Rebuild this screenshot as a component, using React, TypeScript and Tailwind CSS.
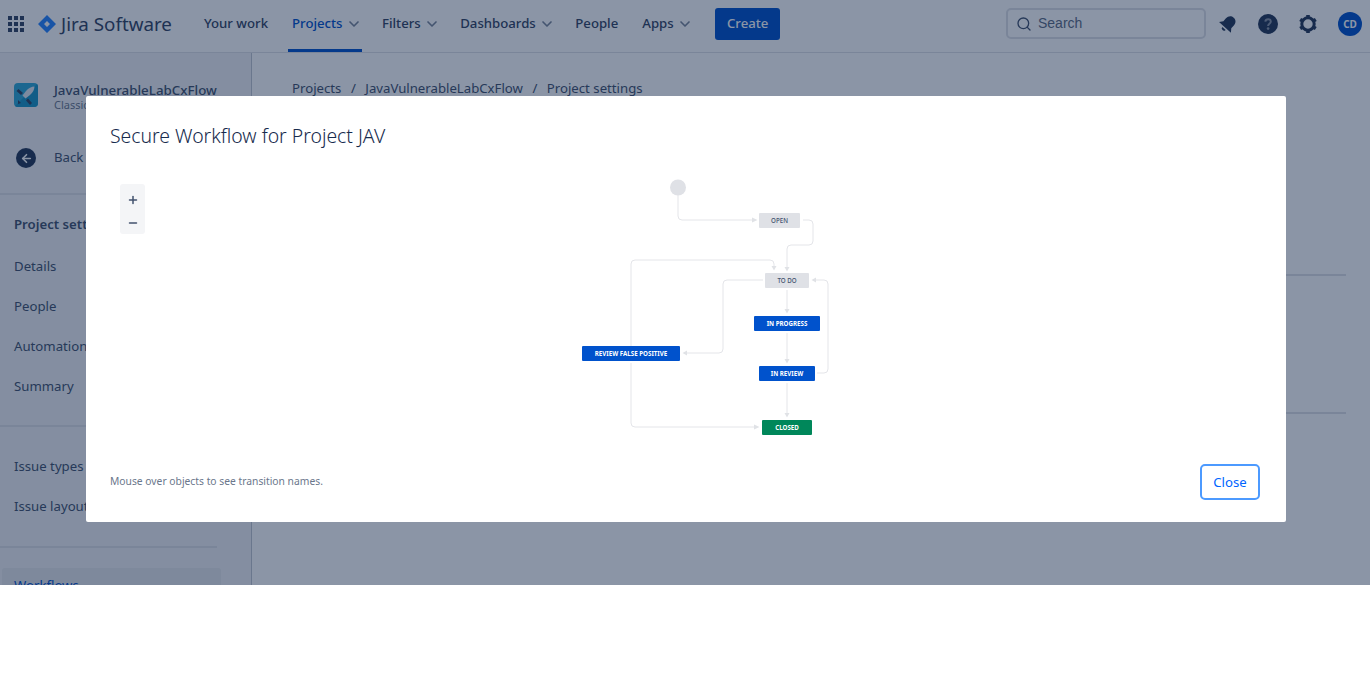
import { ChevronDown, Search, ArrowLeft, Plus, Minus } from 'lucide-react';

const NAV_ITEMS = [
  { label: 'Your work', chevron: false },
  { label: 'Projects', chevron: true, active: true },
  { label: 'Filters', chevron: true },
  { label: 'Dashboards', chevron: true },
  { label: 'People', chevron: false },
  { label: 'Apps', chevron: true },
];

// node boxes in the workflow drawing (same coords as the svg viewBox)
const NODES = [
  { label: 'OPEN', x: 759, y: 213, w: 41, fill: '#dfe1e6', text: '#42526e' },
  { label: 'TO DO', x: 765, y: 273, w: 44, fill: '#dfe1e6', text: '#42526e' },
  { label: 'IN PROGRESS', x: 754, y: 316, w: 66, fill: '#0052cc', text: '#ffffff' },
  { label: 'IN REVIEW', x: 759, y: 366, w: 56, fill: '#0052cc', text: '#ffffff' },
  { label: 'REVIEW FALSE POSITIVE', x: 582, y: 346, w: 98, fill: '#0052cc', text: '#ffffff' },
  { label: 'CLOSED', x: 762, y: 420, w: 50, fill: '#00875a', text: '#ffffff' },
];

const EDGES = [
  'M678 195V216Q678 220 682 220H753',
  'M803 220H809Q813 220 813 224V241Q813 245 809 245H791Q787 245 787 249V267',
  'M631 346V264Q631 260 635 260H770Q774 260 774 264V267',
  'M763 280H727Q723 280 723 284V349Q723 353 719 353H686',
  'M787 290V310',
  'M787 333V360',
  'M817 373H824Q828 373 828 369V284Q828 280 824 280H815',
  'M787 383V415',
  'M631 363V423Q631 427 635 427H755',
];

const ARROWS = [
  '752,217.5 757.5,220 752,222.5',
  '784.5,267 787,271.5 789.5,267',
  '771.5,266 774,270.5 776.5,266',
  '687,350.5 682.5,353 687,355.5',
  '784.5,309 787,313.5 789.5,309',
  '784.5,359 787,363.5 789.5,359',
  '816,277.5 811.5,280 816,282.5',
  '784.5,413 787,417.5 789.5,413',
  '754,424.5 759.5,427 754,429.5',
];

function WorkflowDiagram() {
  return (
    <svg viewBox="110 170 1152 280" className="w-[1152px] h-[280px] block">
      <circle cx="678" cy="187.5" r="8" fill="#dfe1e6" />
      {EDGES.map((d, i) => (
        <path key={i} d={d} fill="none" stroke="#e4e5e9" strokeWidth="1" />
      ))}
      {ARROWS.map((p, i) => (
        <polygon key={i} points={p} fill="#e0e2e6" />
      ))}
      {NODES.map(n => (
        <g key={n.label}>
          <rect x={n.x} y={n.y} width={n.w} height="15" rx="1" fill={n.fill} />
          <text
            x={n.x + n.w / 2}
            y={n.y + 10}
            textAnchor="middle"
            fontSize="6.2"
            fontWeight={n.fill === '#dfe1e6' ? 500 : 700}
            fill={n.text}
            fontFamily='"Noto Sans", sans-serif'
          >
            {n.label}
          </text>
        </g>
      ))}
    </svg>
  );
}

function JiraMark() {
  return (
    <svg viewBox="0 0 18 18" className="w-[18px] h-[18px]">
      <path fillRule="evenodd" d="M9 0l9 9-9 9-9-9zM9 6L6 9l3 3 3-3z" fill="#2684ff" />
    </svg>
  );
}

function BellIcon() {
  return (
    <svg viewBox="0 0 24 24" className="w-6 h-6" fill="#253858">
      <g transform="rotate(42 12 12)">
        <path d="M12 3.500c-3.300 0-5.300 2.400-5.300 5.700v3.800L4 16.500h16L17.300 13V9.200c0-3.300-2-5.700-5.300-5.700z" />
        <path d="M9.800 18a2.200 2.200 0 0 0 4.400 0z" />
      </g>
    </svg>
  );
}

function HelpIcon() {
  return (
    <svg viewBox="0 0 24 24" className="w-6 h-6">
      <circle cx="12" cy="12" r="10" fill="#253858" />
      <path d="M9.300 9.600c.2-1.500 1.300-2.400 2.800-2.400 1.600 0 2.700 1 2.700 2.400 0 2.200-2.700 2.200-2.700 4.300" fill="none" stroke="#8c95a6" strokeWidth="2" />
      <circle cx="12.100" cy="16.600" r="1.300" fill="#8c95a6" />
    </svg>
  );
}

function GearIcon() {
  return (
    <svg viewBox="0 0 24 24" className="w-6 h-6">
      <circle cx="12" cy="12" r="6.200" fill="none" stroke="#253858" strokeWidth="3" />
      <g stroke="#253858" strokeWidth="3.600">
        <path d="M12 3V5.500M12 18.500V21M4.200 7.500L6.400 8.800M17.600 15.200L19.800 16.500M4.200 16.500L6.400 15.200M17.600 8.800L19.800 7.500" />
      </g>
    </svg>
  );
}

function ProjectIcon() {
  return (
    <svg viewBox="0 0 24 24" className="w-6 h-6 rounded-sm">
      <rect width="24" height="24" fill="#2ea9d6" />
      <path d="M0 24L24 0V24z" fill="#1a95c4" />
      <path d="M20.500 3.500c-3 .2-6 1.500-8.500 4.500L8.500 12.500l3 3L16 12c3-2.500 4.300-5.500 4.500-8.500z" fill="#e4ebf2" />
      <path d="M4.500 6l4.500 4-2 2-4.500-4zM12 17.500l2-2 4 4.500-2 2z" fill="#344563" />
      <path d="M4 17l3 3-3 1z" fill="#344563" />
    </svg>
  );
}

function SideLink({ label, bold }: { label: string; bold?: boolean }) {
  return (
    <div className={`h-10 flex items-center pl-[14px] text-[13.2px] whitespace-nowrap text-[#42526e] ${bold ? 'font-semibold' : ''}`}>
      {label}
    </div>
  );
}

export default function App() {
  return (
    <div className="relative h-[585px] overflow-hidden bg-white text-[#172b4d] font-['Noto_Sans',sans-serif]">
      {/* Top bar */}
      <header className="h-[53px] flex items-start border-b border-[#dfe1e6] bg-white">
        <div className="w-[32px] h-12 pl-2 flex items-center">
          <div className="grid grid-cols-3 gap-[2px] w-[16px]">
            {Array.from({ length: 9 }).map((_, i) => (
              <span key={i} className="w-[4px] h-[4px] bg-[#344563]" />
            ))}
          </div>
        </div>
        <div className="flex items-center h-12 ml-[6px] w-[162px]">
          <JiraMark />
          <span className="ml-[5px] text-[18.8px] text-[#344563] leading-none">Jira Software</span>
        </div>
        <nav className="flex items-start gap-4">
          {NAV_ITEMS.map(item => (
            <div
              key={item.label}
              className={`h-[52px] flex items-center pl-1 pb-[1px] border-b-[3px] text-[13.2px] font-medium ${
                item.chevron ? 'pr-0' : 'pr-1'
              } ${item.active ? 'border-[#0052cc] text-[#0052cc]' : 'border-transparent text-[#344563]'}`}
            >
              {item.label}
              {item.chevron && <ChevronDown size={16} strokeWidth={2.500} className="ml-[3.500px] text-[#7a869a]" />}
            </div>
          ))}
        </nav>
        <div className="h-12 flex items-center ml-[22px]">
          <button className="h-8 w-[65px] rounded-[3px] bg-[#0052cc] text-white text-[13.2px] font-medium">Create</button>
        </div>
        <div className="ml-auto h-12 flex items-center">
          <div className="w-[200px] h-[31px] flex items-center rounded-[5px] border-2 border-[#dfe1e6] pl-2 mt-[-1px] font-['Liberation_Sans',sans-serif] text-sm text-[#5e6c84]">
            <Search size={16} className="text-[#42526e]" />
            <span className="ml-[6px] pb-[1px]">Search</span>
          </div>
          <div className="ml-[10px] flex items-center gap-4">
            <BellIcon />
            <HelpIcon />
            <GearIcon />
          </div>
          <div className="ml-[18px] mr-2 w-6 h-6 rounded-full bg-[#0052cc] text-white text-[10px] font-bold flex items-center justify-center">CD</div>
        </div>
      </header>

      <div className="flex h-[532px]">
        {/* Project sidebar */}
        <aside className="w-[252px] shrink-0 bg-[#f1f2f5] border-r border-[#c1c7d0] overflow-hidden">
          <div className="h-[142px] border-b-2 border-[#dfe1e6] mr-[34px] pt-[30px] pl-[14px]">
            <div className="flex items-center h-6">
              <ProjectIcon />
              <div className="ml-4 mt-[4px]">
                <div className="text-[13.35px] font-medium text-[#42526e] leading-4 whitespace-nowrap">JavaVulnerableLabCxFlow</div>
                <div className="text-[11px] text-[#6b778c] leading-[14px]">Classic software project</div>
              </div>
            </div>
            <div className="flex items-center mt-[41px]">
              <span className="w-5 h-5 ml-[2px] rounded-full bg-[#253858] flex items-center justify-center">
                <ArrowLeft size={13} strokeWidth={3} className="text-white" />
              </span>
              <span className="ml-[18px] text-[13.2px] text-[#42526e] whitespace-nowrap">Back to project</span>
            </div>
          </div>
          <div className="pt-[10px] pb-[18px] border-b-2 border-[#dfe1e6] mr-[34px]">
            <SideLink label="Project settings" bold />
            <div className="h-[2px]" />
            <SideLink label="Details" />
            <SideLink label="People" />
            <SideLink label="Automation" />
            <SideLink label="Summary" />
          </div>
          <div className="pt-5 pb-[19px] border-b-2 border-[#dfe1e6] mr-[34px]">
            <SideLink label="Issue types" />
            <SideLink label="Issue layout" />
          </div>
          <div className="mt-5 ml-[2px] mr-[30px] h-9 rounded-[3px] bg-[#e6e8ec] pl-3 flex items-center text-[13.2px] text-[#0052cc]">
            Workflows
          </div>
        </aside>

        {/* Page behind the dialog */}
        <main className="flex-1 pl-10 pr-6">
          <div className="pt-[26px] text-[13.2px] text-[#42526e] flex gap-[9.500px]">
            <span>Projects</span>
            <span>/</span>
            <span>JavaVulnerableLabCxFlow</span>
            <span>/</span>
            <span>Project settings</span>
          </div>
          <div className="mt-[175px] h-[140px] border-y-2 border-[#dfe1e6]" />
        </main>
      </div>

      {/* Dim layer + dialog */}
      <div className="absolute inset-0 bg-[#091e42]/47 pl-[86px] pt-[96px]">
        <section className="w-[1200px] h-[426px] bg-white rounded-[2px] px-6 flex flex-col">
          <h2 className="pt-[25px] h-[74px] text-[19.4px] leading-[30px] font-light text-[#172b4d]">Secure Workflow for Project JAV</h2>
          <div className="relative h-[280px]">
            <WorkflowDiagram />
            <div className="absolute left-[10px] top-[14px] w-[25px] h-[50px] pt-[4px] rounded-[3px] bg-[#f4f5f7] flex flex-col items-center text-[#42526e]">
              <span className="h-[25px] flex items-center"><Plus size={12} strokeWidth={3} /></span>
              <span className="h-[25px] flex items-center"><Minus size={12} strokeWidth={3} /></span>
            </div>
          </div>
          <div className="flex items-start justify-between mt-[14px]">
            <span className="text-[10.3px] text-[#6b778c] mt-[10px]">Mouse over objects to see transition names.</span>
            <button className="w-[60px] h-9 mr-[2px] pt-[2px] rounded-[5px] border-2 border-[#4c9aff] text-[13.2px] text-[#0065ff]">Close</button>
          </div>
        </section>
      </div>
    </div>
  );
}
